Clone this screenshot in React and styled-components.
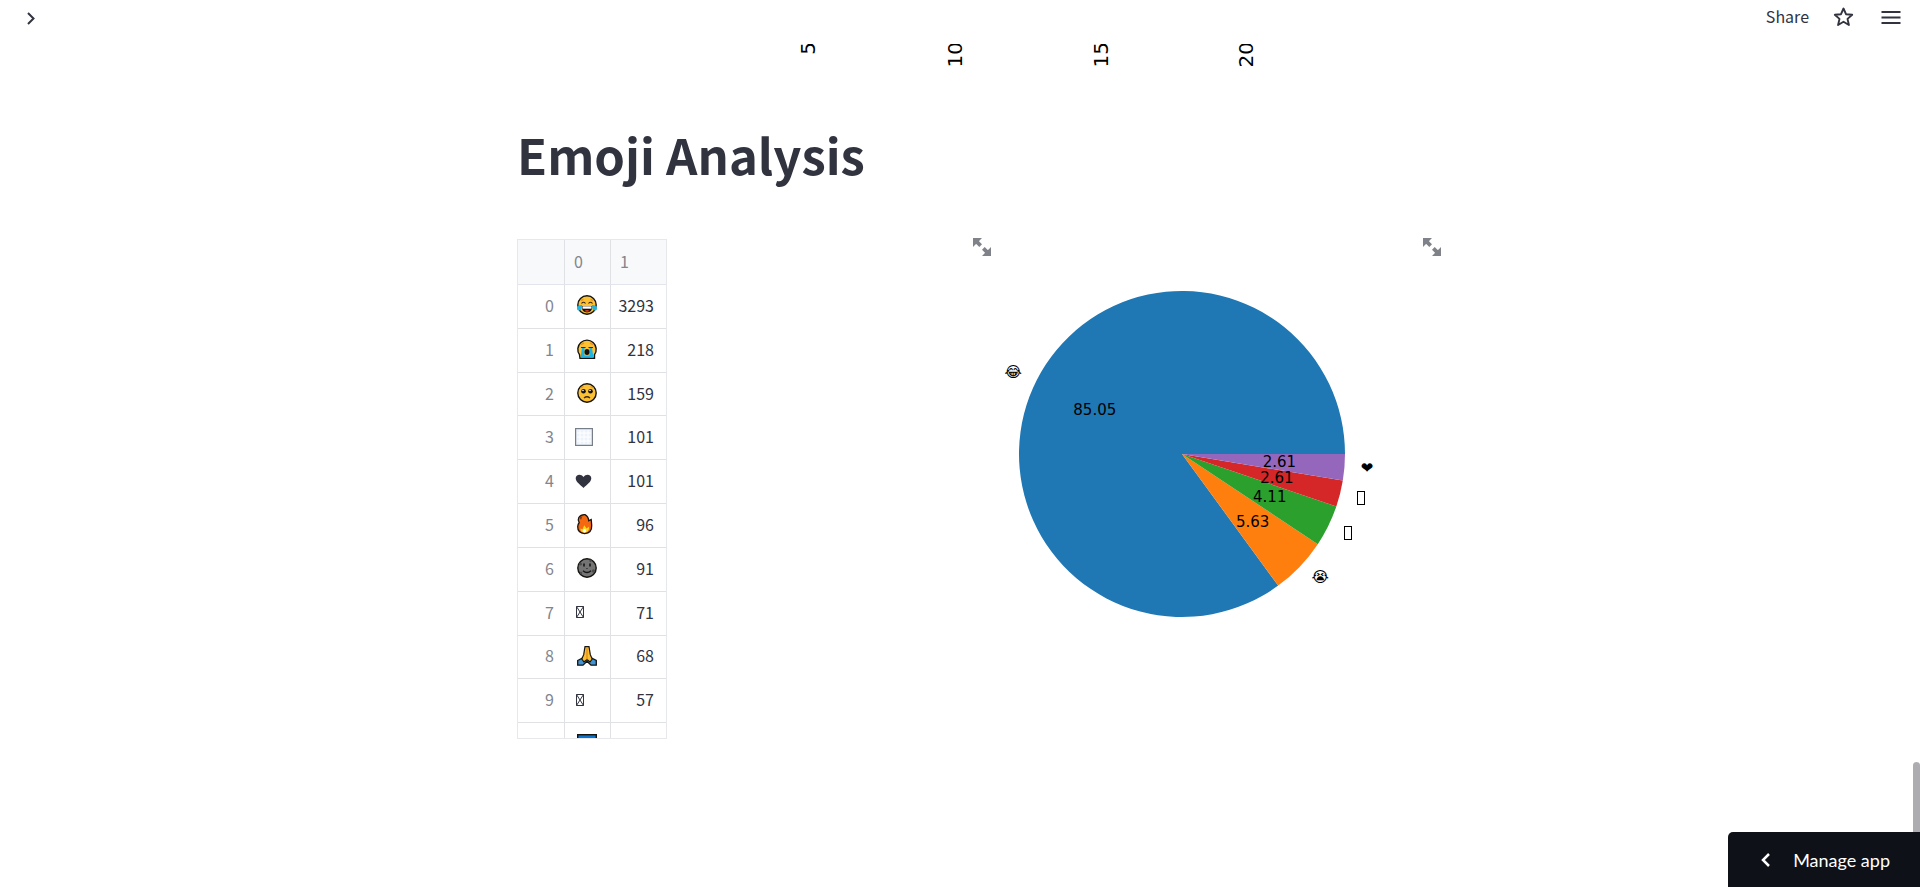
import React from "react";
import styled, { createGlobalStyle } from "styled-components";

const GlobalStyle = createGlobalStyle`
  * { box-sizing: border-box; }
  body {
    margin: 0;
    background: #ffffff;
    color: #31333f;
    font-family: "Noto Sans CJK SC", "Noto Sans", sans-serif;
    font-size: 16px;
    line-height: 24px;
    overflow: hidden;
  }
  button { font: inherit; color: inherit; border: 0; padding: 0; background: none; cursor: pointer; }
`;

const Page = styled.div`
  height: 100vh;
  display: flex;
  flex-direction: column;
  position: relative;
`;

const Header = styled.header`
  flex: none;
  height: 44px;
  padding: 0 17px 8px 20px;
  display: flex;
  align-items: center;
  justify-content: space-between;
`;

const Toolbar = styled.div`
  display: flex;
  align-items: center;
  gap: 24px;
`;

const ShareButton = styled.button`
  && { padding-bottom: 4px; }
`;

const IconButton = styled.button`
  display: flex;
`;

const Scroller = styled.main`
  flex: 1;
  min-height: 0;
  overflow: hidden;
  padding-right: 6px;
`;

const Block = styled.div`
  width: 100%;
  max-width: 880px;
  margin: 0 auto;
`;

const AxisLabels = styled.svg`
  display: block;
  width: 100%;
`;

const Title = styled.h1`
  margin: 40px 0 51px;
  font-size: 49px;
  line-height: 68px;
  font-weight: 700;
`;

const Columns = styled.div`
  display: grid;
  grid-template-columns: 1fr 1fr;
  gap: 20px;
`;

const Panel = styled.section`
  position: relative;
  min-width: 0;
`;

const ExpandButton = styled.button`
  position: absolute;
  top: -1px;
  left: calc(100% + 26px);
  display: flex;
`;

const TableFrame = styled.div`
  width: 150px;
  height: 500px;
  overflow: hidden;
  border: 1px solid #e6e8ec;
`;

const Table = styled.table`
  width: 148px;
  height: 527px;
  table-layout: fixed;
  border-collapse: separate;
  border-spacing: 0;

  tbody tr { height: 43px; }
`;

const IndexColumn = styled.col`
  width: 47px;
`;

const EmojiColumn = styled.col`
  width: 46px;
`;

const HeadCell = styled.th`
  height: 45px;
  padding: 0 0 2px 9px;
  border-bottom: 1px solid #e4e5ec;
  border-right: ${(p) => (p.$last ? "0" : "1px solid #e0e1e5")};
  background: #f8f9fb;
  color: #83858d;
  font-weight: 400;
  text-align: left;
`;

const IndexCell = styled.th`
  padding: 0 10px 3px 0;
  border-bottom: 1px solid #e0e1e5;
  border-right: 1px solid #e0e1e5;
  color: #83858d;
  font-weight: 400;
  text-align: right;
`;

const EmojiCell = styled.td`
  padding: 0 0 2px 10px;
  border-bottom: 1px solid #e0e1e5;
  border-right: 1px solid #e0e1e5;

  svg { display: block; }
`;

const CountCell = styled.td`
  padding: 0 12px 3px 0;
  border-bottom: 1px solid #e0e1e5;
  text-align: right;
`;

const PieSvg = styled.svg`
  display: block;
  width: 100%;
  font-family: "DejaVu Sans", sans-serif;
  font-size: 15px;
`;

const ScrollThumb = styled.div`
  position: absolute;
  right: 0;
  bottom: 0;
  width: 7px;
  height: 125px;
  border-radius: 4px 4px 0 0;
  background: #adacb1;
`;

const ManageButton = styled.button`
  && {
    position: absolute;
    right: 0;
    bottom: 0;
    height: 55px;
    padding: 0 30px 0 29px;
    display: flex;
    align-items: center;
    gap: 16px;
    border-radius: 5px 0 0 0;
    background: #0e1117;
    color: #ffffff;
    font-family: Lato, "Noto Sans", sans-serif;
    font-size: 18px;
  }
`;

const Face = ({ fill = "#fcc132", children, label }) => (
  <svg width="24" height="22" viewBox="0 0 24 22" role="img" aria-label={label}>
    <circle cx="12" cy="11" r="9.2" fill={fill} stroke="#15130f" strokeWidth="1.4" />
    {children}
  </svg>
);

const emoji = {
  joy: (
    <Face label="face with tears of joy">
      <path d="M6 6.500l2.500-1.200M18 6.500l-2.500-1.200" stroke="#e8932c" strokeWidth="1.400" />
      <path d="M6.500 9.500q2-2.500 4 0M13.500 9.500q2-2.500 4 0" fill="none" stroke="#3b2a12" strokeWidth="1.200" />
      <path d="M6.500 12h11q-.5 6.500-5.500 6.500t-5.500-6.500z" fill="#17120e" />
      <path d="M7.500 12.300h9v2.400h-9z" fill="#fff" />
      <path d="M9.500 17q2.500-2 5 0-2.500 1.500-5 0z" fill="#e5352c" />
      <path d="M2.500 12.500q2-2 4.500-1.500 0 5.500-3 5.500t-1.500-4zM21.500 12.500q-2-2-4.500-1.500 0 5.500 3 5.500t1.500-4z" fill="#1fb4e2" />
    </Face>
  ),
  sob: (
    <svg width="24" height="22" viewBox="0 0 24 22" role="img" aria-label="loudly crying face">
      <path d="M5 20.200h14.500v-3.500a9.200 9.200 0 1 0-15 0z" fill="#fcc132" stroke="#15130f" strokeWidth="1.400" />
      <path d="M6 6.500l3-1.500M18 6.500l-3-1.500" stroke="#e8932c" strokeWidth="1.400" />
      <path d="M6 9.500h4.500M13.500 9.500h4.500" stroke="#3b2a12" strokeWidth="1.200" />
      <path d="M7 10h2.500v9.500h-4zM17 10h-2.500v9.500h4z" fill="#1fb4e2" />
      <path d="M6 19.500h12v-2h-12z" fill="#1fb4e2" />
      <ellipse cx="12" cy="14" rx="2.500" ry="2.900" fill="#17120e" />
    </svg>
  ),
  pleading: (
    <Face label="pleading face">
      <path d="M5.500 6l3-1.500M18.500 6l-3-1.500" stroke="#e8932c" strokeWidth="1.200" />
      <circle cx="8.500" cy="9.300" r="2.300" fill="#17120e" />
      <circle cx="15.500" cy="9.300" r="2.300" fill="#17120e" />
      <circle cx="8" cy="8.500" r=".8" fill="#fff" />
      <circle cx="15" cy="8.500" r=".8" fill="#fff" />
      <path d="M9 16q3-2.500 6 0" fill="none" stroke="#3b2a12" strokeWidth="1.300" />
    </Face>
  ),
  square: (
    <svg width="18" height="18" viewBox="0 0 18 18" role="img" aria-label="white square">
      <rect x=".6" y=".6" width="16.800" height="16.800" fill="#edf3fa" stroke="#777e89" strokeWidth="1.200" />
      <path d="M5 2v14M9 2v14M13 2v14M2 5h14M2 9h14M2 13h14" stroke="#ffffff" />
    </svg>
  ),
  heart: (
    <svg width="18" height="16" viewBox="0 0 18 16" role="img" aria-label="heart">
      <path d="M8.500 15C5.500 12 .7 9 .7 5.300.7 1.500 6 .5 8.500 4.100 11 .5 16.300 1.500 16.300 5.300c0 3.700-4.800 6.700-7.800 9.700z" fill="#31333f" />
    </svg>
  ),
  fire: (
    <svg width="20" height="22" viewBox="0 0 20 22" role="img" aria-label="fire">
      <path d="M4.200 9.500Q2.500 7 3.800 4.500 6 1.300 10 1.600q3.500 1.800 3.700 6.200l2.500-1.300q.3 2.500.5 6Q17 20 9.700 20.500 2.500 20 2.700 13.500 2.900 11.300 4.200 9.500z" fill="#f4680f" stroke="#1c120c" strokeWidth="1.300" />
      <path d="M4.500 4.500l3-1.500-1.500 4z" fill="#8a3512" />
      <path d="M5.500 15.500l2 .7 1.800-4 2.200 3.300 2.500-1.700q.5 5.600-4.500 5.900-4.200-.4-4-4.200z" fill="#ffd91d" />
      <circle cx="9.500" cy="17.800" r="1.700" fill="#fff" />
    </svg>
  ),
  moon: (
    <Face fill="#747474" label="new moon face">
      <circle cx="5.500" cy="7" r="1.500" fill="#4c4c4c" />
      <circle cx="18.500" cy="14" r="1.700" fill="#4c4c4c" />
      <circle cx="15.500" cy="3.800" r="1.200" fill="#4c4c4c" />
      <circle cx="6" cy="16" r="1.200" fill="#4c4c4c" />
      <path d="M9 6.500v3M15 6.500v3" stroke="#151515" strokeWidth="1.600" />
      <path d="M8 13.800q4 3.500 8 0" fill="none" stroke="#151515" strokeWidth="1.300" />
      <path d="M11.300 11.500h1.400" stroke="#303030" />
    </Face>
  ),
  pray: (
    <svg width="24" height="22" viewBox="0 0 24 22" role="img" aria-label="folded hands">
      <path d="M2.700 15.500l5-2.500h8.600l5 2.500v4.700h-5.300l-4-4-4 4H2.700z" fill="#3f94d6" stroke="#15130f" strokeWidth="1.300" />
      <path d="M10 1.700h4l1.300 8 1.900 4.300-2.200 3-3-2.500-3 2.500-2.200-3 1.900-4.300z" fill="#fcbe30" stroke="#15130f" strokeWidth="1.200" />
      <path d="M12 2.500v12" stroke="#dd8b1d" strokeWidth="1.200" />
    </svg>
  ),
  blue: (
    <svg width="24" height="22" viewBox="0 0 24 22" role="img" aria-label="blue square">
      <rect x="2.700" y="1.700" width="18.600" height="18.600" fill="#0b74d1" stroke="#15130f" strokeWidth="1.400" />
    </svg>
  ),
  missing: (
    <svg width="10" height="12" viewBox="0 0 10 12" role="img" aria-label="unsupported emoji">
      <path d="M1.500 .5h7v11h-7zM1.500 .5l7 11M8.500 .5l-7 11" fill="none" stroke="#31333f" />
    </svg>
  ),
};

const rows = [
  ["0", "joy", "3293"],
  ["1", "sob", "218"],
  ["2", "pleading", "159"],
  ["3", "square", "101"],
  ["4", "heart", "101"],
  ["5", "fire", "96"],
  ["6", "moon", "91"],
  ["7", "missing", "71"],
  ["8", "pray", "68"],
  ["9", "missing", "57"],
  ["", "blue", ""],
];

const slices = [
  { value: 85.05, color: "#1f77b4", label: "😂" },
  { value: 5.63, color: "#ff7f0e", label: "😭" },
  { value: 4.11, color: "#2ca02c", label: null },
  { value: 2.61, color: "#d62728", label: null },
  { value: 2.61, color: "#9467bd", label: "❤" },
];

function Pie() {
  const cx = 215;
  const cy = 215;
  const r = 163;
  const total = slices.reduce((sum, s) => sum + s.value, 0);
  let start = 0;
  const parts = slices.map((s) => {
    const end = start + (s.value / total) * Math.PI * 2;
    const part = { ...s, start, end, mid: (start + end) / 2 };
    start = end;
    return part;
  });
  const at = (angle, k) => [cx + Math.cos(angle) * r * k, cy - Math.sin(angle) * r * k];

  return (
    <PieSvg viewBox="0 0 430 430" role="img" aria-label="Emoji share">
      {parts.map((s, i) => (
        <path
          key={i}
          d={`M${cx} ${cy}L${at(s.start, 1).join(" ")}A${r} ${r} 0 ${s.end - s.start > Math.PI ? 1 : 0} 0 ${at(s.end, 1).join(" ")}Z`}
          fill={s.color}
        />
      ))}
      {parts.map((s, i) => {
        const [tx, ty] = at(s.mid, 0.6);
        const [lx, ly] = at(s.mid, 1.1);
        return (
          <g key={i}>
            <text x={tx} y={ty + 5} textAnchor="middle">{s.value.toFixed(2)}</text>
            {s.label ? (
              <text x={lx} y={ly + 4} textAnchor={Math.cos(s.mid) < 0 ? "end" : "start"}>{s.label}</text>
            ) : (
              <rect x={Math.round(lx) + 1.5} y={Math.round(ly) - 6.5} width="7" height="13" fill="none" stroke="#000" />
            )}
          </g>
        );
      })}
    </PieSvg>
  );
}

const Expand = ({ label }) => (
  <ExpandButton type="button" aria-label={label}>
    <svg width="18" height="18" viewBox="0 0 18 18" fill="#808289">
      <path d="M0 0h9L6.300 2.700 6 3.300l3 3L6.300 9l-3-3-.6.300L0 9zM18 18H9l2.700-2.700.3-.6-3-3L11.700 9l3 3 .6-.3L18 9z" />
    </svg>
  </ExpandButton>
);

const ticks = [["5", 298], ["10", 445], ["15", 591], ["20", 736]];

export default function App() {
  return (
    <Page>
      <GlobalStyle />
      <Header>
        <IconButton type="button" aria-label="Open sidebar">
          <svg width="20" height="20" viewBox="0 0 20 20" fill="none" stroke="#31333f" strokeWidth="2">
            <path d="M8 5l5.500 5.500L8 16" />
          </svg>
        </IconButton>
        <Toolbar>
          <ShareButton type="button">Share</ShareButton>
          <IconButton type="button" aria-label="Favorite">
            <svg width="22" height="22" viewBox="0 0 22 22" fill="none" stroke="#31333f" strokeWidth="1.900" strokeLinejoin="round">
              <path d="M10.500 1.500l2.500 5.700 6.200.6-4.700 4.100 1.400 6.100-5.400-3.200L5.100 18l1.400-6.100-4.700-4.100 6.200-.6z" />
            </svg>
          </IconButton>
          <IconButton type="button" aria-label="Menu">
            <svg width="24" height="20" viewBox="0 0 24 20" stroke="#31333f" strokeWidth="2">
              <path d="M2.500 4h19M2.500 9.500h19M2.500 15h19" />
            </svg>
          </IconButton>
        </Toolbar>
      </Header>
      <Scroller>
        <Block>
          <AxisLabels viewBox="0 44 880 36" fontFamily="DejaVu Sans" fontSize="20" fill="#000" role="img" aria-label="Axis labels">
            {ticks.map(([t, x]) => (
              <text key={t} transform={`translate(${x} 42) rotate(-90)`} textAnchor="end">{t}</text>
            ))}
          </AxisLabels>
          <Title>Emoji Analysis</Title>
          <Columns>
            <Panel>
              <TableFrame>
                <Table>
                  <colgroup>
                    <IndexColumn />
                    <EmojiColumn />
                    <col />
                  </colgroup>
                  <thead>
                    <tr>
                      <HeadCell />
                      <HeadCell scope="col">0</HeadCell>
                      <HeadCell scope="col" $last>1</HeadCell>
                    </tr>
                  </thead>
                  <tbody>
                    {rows.map(([index, name, count]) => (
                      <tr key={index}>
                        <IndexCell scope="row">{index}</IndexCell>
                        <EmojiCell>{emoji[name]}</EmojiCell>
                        <CountCell>{count}</CountCell>
                      </tr>
                    ))}
                  </tbody>
                </Table>
              </TableFrame>
              <Expand label="Expand table" />
            </Panel>
            <Panel>
              <Pie />
              <Expand label="Expand chart" />
            </Panel>
          </Columns>
        </Block>
      </Scroller>
      <ScrollThumb />
      <ManageButton type="button">
        <svg width="20" height="20" viewBox="0 0 20 20" fill="none" stroke="#fff" strokeWidth="2.500">
          <path d="M12 4L6 10l6 6" />
        </svg>
        Manage app
      </ManageButton>
    </Page>
  );
}
